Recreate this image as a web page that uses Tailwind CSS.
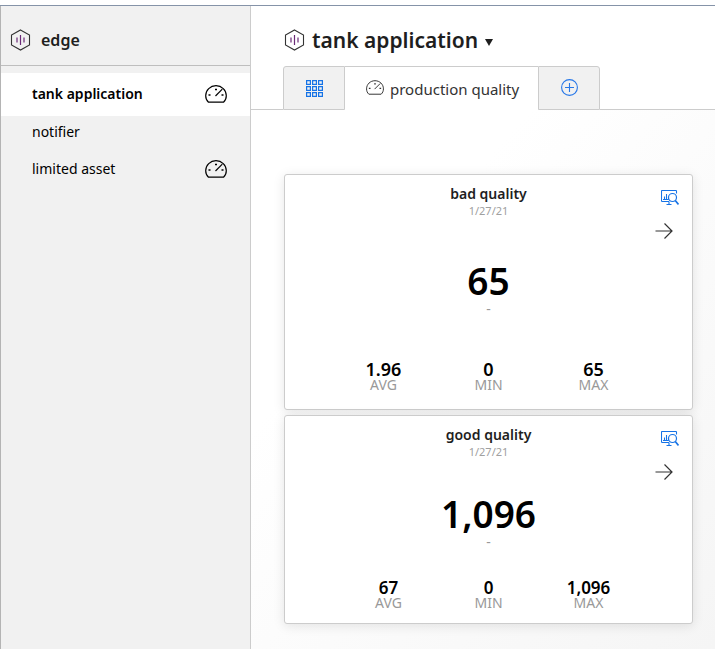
<!DOCTYPE html>
<html lang="en">
<head>
<meta charset="utf-8">
<meta name="viewport" content="width=device-width, initial-scale=1">
<title>edge – tank application</title>
<script src="https://cdn.jsdelivr.net/npm/@tailwindcss/browser@4"></script>
</head>
<body class="flex min-h-screen flex-col bg-white pt-[5px] font-['Noto_Sans','Open_Sans',sans-serif] text-[#1e1e1e]">
<svg class="hidden">
  <symbol id="hex" viewBox="0 0 20 22" fill="none">
    <path d="M10 1 19 6v10l-9 5-9-5V6z" stroke="#333" stroke-width="1.1"/>
    <path d="M6.500 8.500v5M13.500 8.500v5M10 6v10" stroke="#6b2a78" stroke-width="1.2"/>
  </symbol>
  <symbol id="gauge" viewBox="0 0 22 18" fill="none" stroke="currentColor">
    <path d="M3.500 17.200C1.600 15.500.700 13.200.700 10.700.700 5 5.300.700 11 .700S21.300 5 21.300 10.700c0 2.500-.900 4.800-2.800 6.500z" stroke-width="1.200"/>
    <path d="M10.500 11 17.300 4.200" stroke-width="1.200"/>
    <path d="M3.500 10h2M16.500 10h2M10 4.500h2" stroke-width="1.600"/>
  </symbol>
  <symbol id="analyze" viewBox="0 0 18 16" fill="none" stroke="currentColor">
    <path d="M15.500 3.500V1.200q0-.700-.700-.700H1.200q-.700 0-.700.700v9.600q0 .700.700.700H8M8 11.500v3M5.500 14.500h5M3.500 6.500v3M5.500 4v5.500M7.500 7v2.500M2 9.500h5.500" stroke-width="1.100"/>
    <circle cx="11.500" cy="7.500" r="4" stroke-width="1.200"/>
    <path d="m14.300 10.500 3.200 4" stroke-width="1.700"/>
  </symbol>
  <symbol id="arrow" viewBox="0 0 18 16" fill="none" stroke="currentColor">
    <path d="M.500 8.500h16.500M9.500 1l7.500 7.500L9.500 16" stroke-width="1.200"/>
  </symbol>
</svg>
<div class="flex grow border-t border-[#8593a8]">
  <aside class="w-[251px] shrink-0 border-x border-l-[#b4b4b4] border-r-[#ccc] bg-[#f1f1f1]">
    <header class="flex h-[60px] items-center gap-[10px] border-b border-[#bebebe] px-[9px] pt-2">
      <svg class="h-[22px] w-[21px]"><use href="#hex"/></svg>
      <h2 class="text-[16px] leading-5 font-semibold">edge</h2>
    </header>
    <nav class="flex flex-col pt-[7px] text-[14px] leading-5 text-black">
      <a href="#" class="flex h-[43px] items-center justify-between bg-white pr-[23px] pb-[2px] pl-[31px] font-semibold">tank application<svg class="h-[18px] w-[22px]"><use href="#gauge"/></svg></a>
      <a href="#" class="flex h-[34px] items-center pb-[2px] pl-[31px]">notifier</a>
      <a href="#" class="flex h-10 items-center justify-between pr-[23px] pb-[2px] pl-[31px]">limited asset<svg class="h-[18px] w-[22px]"><use href="#gauge"/></svg></a>
    </nav>
  </aside>
  <main class="flex min-w-0 grow flex-col">
    <button class="flex h-[60px] items-center gap-[7px] px-[33px] pt-2">
      <svg class="h-[22px] w-[21px]"><use href="#hex"/></svg>
      <span class="text-[21px] leading-7 font-semibold">tank application</span>
      <svg class="mt-1 h-[7px] w-2" viewBox="0 0 8 7"><path d="M0 0h8L4 7z" fill="#1e1e1e"/></svg>
    </button>
    <div class="flex">
      <span class="w-8 border-b border-[#ccc]"></span>
      <button aria-label="overview" class="flex h-11 w-[62px] items-center justify-center rounded-tl-[3px] border border-[#ccc] bg-[#f1f1f1]">
        <svg class="size-[17px]" viewBox="0 0 17 17" fill="none" stroke="#1673e6" stroke-width="1.200"><path d="M.600.600h3.800v3.800H.600zM6.600.600h3.800v3.800H6.600zM12.600.600h3.800v3.800h-3.800zM.600 6.600h3.800v3.800H.600zM6.600 6.600h3.800v3.800H6.600zM12.600 6.600h3.800v3.800h-3.800zM.600 12.600h3.800v3.800H.600zM6.600 12.600h3.800v3.800H6.600zM12.600 12.600h3.800v3.800h-3.800z"/></svg>
      </button>
      <button class="flex h-11 items-center gap-[6px] border-t border-[#ccc] pr-[19px] pl-[21px] text-[15px] leading-5 text-[#333]">
        <svg class="mb-[2px] h-[15px] w-[18px]"><use href="#gauge"/></svg>production quality
      </button>
      <button aria-label="add" class="flex h-11 w-[62px] items-center justify-center rounded-tr-[3px] border border-[#ccc] bg-[#f1f1f1] pb-[2px]">
        <svg class="size-[17px]" viewBox="0 0 17 17" fill="none" stroke="#2878e8" stroke-width="1.100"><circle cx="8.500" cy="8.500" r="7.900"/><path d="M8.500 4v9M4 8.500h9"/></svg>
      </button>
      <span class="grow border-b border-[#ccc]"></span>
    </div>
    <div class="flex grow flex-col gap-[5px] bg-linear-to-br from-white from-30% to-[#f5f5f5] pt-16 pr-[22px] pb-[25px] pl-[33px] text-center">
      <section class="relative flex grow-[236] basis-0 flex-col rounded-[3px] border border-[#ccc] bg-white pt-[9px] pb-[17px] shadow-[0_2px_12px_rgba(0,0,0,0.1)]">
        <h3 class="text-[14px] leading-5 font-semibold">bad quality</h3>
        <p class="text-[11px] leading-[14px] text-[#a0a0a0]">1/27/21</p>
        <div class="absolute top-[15px] right-[13px] flex flex-col gap-4">
          <button aria-label="analyze" class="text-[#1673e6]"><svg class="h-4 w-[18px]"><use href="#analyze"/></svg></button>
          <button aria-label="open" class="-ml-[6px] text-[#333]"><svg class="h-[17px] w-[18px]"><use href="#arrow"/></svg></button>
        </div>
        <div class="flex grow flex-col justify-center pb-px">
          <p class="text-[37px] leading-10 font-semibold text-black">65</p>
          <p class="text-[14px] leading-4 text-[#999]">-</p>
        </div>
        <dl class="mx-auto grid w-[315px] grid-cols-3">
          <div class="flex flex-col-reverse"><dt class="text-[14px] leading-[14px] text-[#999]">AVG</dt><dd class="text-[18px] leading-[17px] font-semibold text-black">1.96</dd></div>
          <div class="flex flex-col-reverse"><dt class="text-[14px] leading-[14px] text-[#999]">MIN</dt><dd class="text-[18px] leading-[17px] font-semibold text-black">0</dd></div>
          <div class="flex flex-col-reverse"><dt class="text-[14px] leading-[14px] text-[#999]">MAX</dt><dd class="text-[18px] leading-[17px] font-semibold text-black">65</dd></div>
        </dl>
      </section>
      <section class="relative flex grow-[209] basis-0 flex-col rounded-[3px] border border-[#ccc] bg-white pt-[9px] pb-[13px] shadow-[0_2px_12px_rgba(0,0,0,0.1)]">
        <h3 class="text-[14px] leading-5 font-semibold">good quality</h3>
        <p class="text-[11px] leading-[14px] text-[#a0a0a0]">1/27/21</p>
        <div class="absolute top-[15px] right-[13px] flex flex-col gap-4">
          <button aria-label="analyze" class="text-[#1673e6]"><svg class="h-4 w-[18px]"><use href="#analyze"/></svg></button>
          <button aria-label="open" class="-ml-[6px] text-[#333]"><svg class="h-[17px] w-[18px]"><use href="#arrow"/></svg></button>
        </div>
        <div class="flex grow flex-col justify-center pt-[4px]">
          <p class="text-[37px] leading-10 font-semibold text-black">1,096</p>
          <p class="text-[14px] leading-4 text-[#999]">-</p>
        </div>
        <dl class="mx-auto grid w-[300px] grid-cols-3">
          <div class="flex flex-col-reverse"><dt class="text-[14px] leading-[14px] text-[#999]">AVG</dt><dd class="text-[17px] leading-4 font-semibold text-black">67</dd></div>
          <div class="flex flex-col-reverse"><dt class="text-[14px] leading-[14px] text-[#999]">MIN</dt><dd class="text-[17px] leading-4 font-semibold text-black">0</dd></div>
          <div class="flex flex-col-reverse"><dt class="text-[14px] leading-[14px] text-[#999]">MAX</dt><dd class="text-[17px] leading-4 font-semibold text-black">1,096</dd></div>
        </dl>
      </section>
    </div>
  </main>
</div>
</body>
</html>
